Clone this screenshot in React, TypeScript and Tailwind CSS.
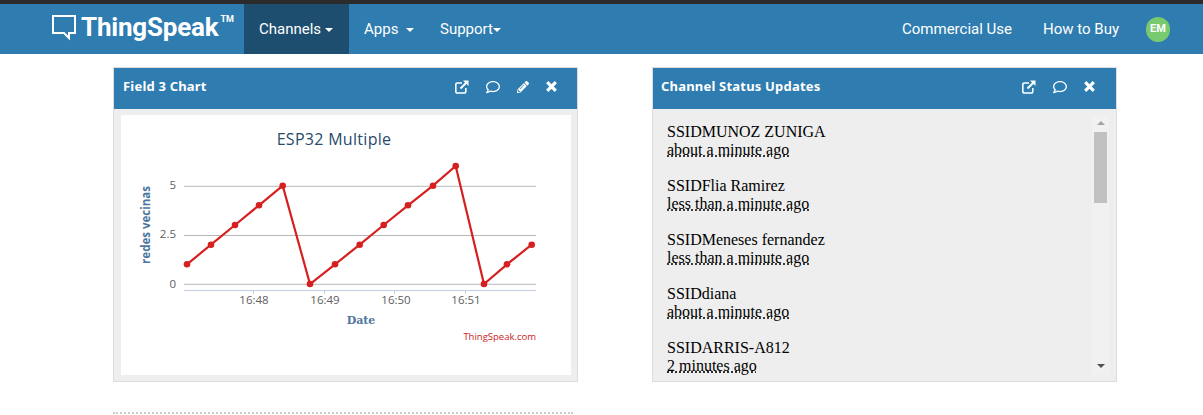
import React from 'react';
import { FaPencilAlt, FaRegComment } from 'react-icons/fa';

const points = [
  [187, 264.3], [211, 244.7], [235, 225], [259, 205.3], [282.7, 185.7], [310, 284], [335, 264.3],
  [359.7, 244.7], [383.7, 225], [408, 205.3], [433, 185.7], [455.7, 166], [484, 284], [507, 264.3], [531.7, 244.7],
];

const updates = [
  ['SSIDMUNOZ ZUNIGA', 'about a minute ago'],
  ['SSIDFlia Ramirez', 'less than a minute ago'],
  ['SSIDMeneses fernandez', 'less than a minute ago'],
  ['SSIDdiana', 'about a minute ago'],
  ['SSIDARRIS-A812', '2 minutes ago'],
];

const Caret = () => (
  <span className="inline-block w-0 h-0 ml-1 align-middle border-x-[4px] border-x-transparent border-t-[4px] border-t-white" />
);

const ExternalIcon = () => (
  <svg width="14" height="14" viewBox="0 0 14 14" fill="none" stroke="white" strokeWidth="1.6">
    <path d="M7 3H2.2A1.4 1.4 0 0 0 .8 4.4v7.2A1.4 1.4 0 0 0 2.2 13h7.2a1.4 1.4 0 0 0 1.4-1.4V8" />
    <path d="M5.5 8.5L12 2" strokeWidth="2" />
    <path d="M8 .5h5.5V6z" fill="white" stroke="none" />
  </svg>
);

const CloseIcon = () => (
  <svg width="11" height="11" viewBox="0 0 11 11" stroke="white" strokeWidth="3.2">
    <path d="M1.2 1.2l8.6 8.6M9.8 1.2l-8.6 8.6" />
  </svg>
);

const Chart = () => (
  <svg width="450" height="260" viewBox="121 115 450 260" className="block">
    <text x="334" y="145" textAnchor="middle" fontSize="16" letterSpacing="0.3" fill="#274b6d" fontFamily="'Open Sans', sans-serif">ESP32 Multiple</text>
    {[186.3, 235.5, 284.3].map((y) => (
      <line key={y} x1="184" x2="536" y1={y} y2={y} stroke="#b8b8b8" strokeWidth="1" />
    ))}
    <line x1="184" x2="536" y1="290.5" y2="290.5" stroke="#c0d0e0" strokeWidth="1" />
    {[253.5, 324.5, 394.5, 465.5].map((x) => (
      <line key={x} x1={x} x2={x} y1="290" y2="294" stroke="#c0d0e0" strokeWidth="1" />
    ))}
    <g fontSize="11.5" fill="#606060" fontFamily="'Open Sans', sans-serif">
      <text x="176" y="189" textAnchor="end">5</text>
      <text x="176" y="238" textAnchor="end">2.5</text>
      <text x="176" y="288" textAnchor="end">0</text>
      <text x="254" y="304" textAnchor="middle">16:48</text>
      <text x="325" y="304" textAnchor="middle">16:49</text>
      <text x="396" y="304" textAnchor="middle">16:50</text>
      <text x="466" y="304" textAnchor="middle">16:51</text>
    </g>
    <text x="361" y="324" textAnchor="middle" fontSize="11" fontWeight="bold" fill="#4d759e" fontFamily="'DejaVu Serif', serif">Date</text>
    <text transform="translate(150 225) rotate(-90)" textAnchor="middle" fontSize="11.5" fontWeight="bold" fill="#4d759e" fontFamily="'Open Sans', sans-serif">redes vecinas</text>
    <text x="536" y="340" textAnchor="end" fontSize="9.5" fill="#cc2222" fontFamily="'Open Sans', sans-serif">ThingSpeak.com</text>
    <polyline points={points.map((p) => p.join(',')).join(' ')} fill="none" stroke="#d62020" strokeWidth="2.2" />
    {points.map(([x, y]) => (
      <circle key={x} cx={x} cy={y} r="3.3" fill="#d62020" />
    ))}
  </svg>
);

const PanelHead = ({ title, edit }: { title: string; edit?: boolean }) => (
  <div className="h-[41px] pb-[4px] bg-[#2e7cb0] flex items-center justify-between text-white">
    <span className="text-[13px] font-bold tracking-[0.2px]">{title}</span>
    <div className={`flex items-center ${edit ? 'gap-[17px] pr-[20px]' : 'gap-[17px] pr-[21px]'}`}>
      <ExternalIcon />
      <FaRegComment size={14} />
      {edit && <FaPencilAlt size={12} />}
      <CloseIcon />
    </div>
  </div>
);

export default function App() {
  return (
    <div className="w-[1203px] h-[415px] overflow-hidden bg-white font-['Noto_Sans',sans-serif]">
      <div className="h-1 bg-[#2b2b2b]" />
      <nav className="h-[50px] bg-[#2e7cb0] flex items-center text-white text-[15px] font-['Roboto',sans-serif]">
        <div className="flex items-center w-[244px] pl-[52px] mb-[4px]">
          <svg width="25" height="27" viewBox="0 0 25 27" fill="none" stroke="white" strokeWidth="2" className="mt-[1px]">
            <path d="M1 2h22v17h-6v5l-5-5H1z" />
          </svg>
          <span className="ml-[4px] text-[26px] font-bold tracking-[-0.2px]">ThingSpeak</span>
          <span className="text-[9px] font-bold mb-[14px] ml-[2px]">TM</span>
        </div>
        <div className="h-full w-[105px] bg-[#1d4e70] flex items-center pl-[15px] pt-[1px]">Channels <Caret /></div>
        <div className="pl-[15px] w-[76px] pt-[1px]">Apps <Caret /></div>
        <div className="pl-[15px] pt-[1px]">Support<span className="inline-block w-0 h-0 align-middle border-x-[4px] border-x-transparent border-t-[4px] border-t-white" /></div>
        <div className="ml-auto flex items-center pr-[33px] pt-[1px]">
          <span>Commercial Use</span>
          <span className="ml-[31px]">How to Buy</span>
          <span className="ml-[27px] w-[24px] h-[25px] rounded-full bg-[#79c96f] flex items-center justify-center text-[11px] font-bold">EM</span>
        </div>
      </nav>
      <div className="flex gap-[74px] pl-[113px] pt-[13px]">
        <section className="w-[465px] h-[315px] bg-[#eee] border border-[#ddd]">
          <div className="pl-[9px] bg-[#2e7cb0]"><PanelHead title="Field 3 Chart" edit /></div>
          <div className="pt-[6px] pl-[7px]"><div className="bg-white w-[450px]"><Chart /></div></div>
        </section>
        <section className="w-[465px] h-[315px] bg-[#eee] border border-[#ddd]">
          <div className="pl-[8px] bg-[#2e7cb0]"><PanelHead title="Channel Status Updates" /></div>
          <div className="flex pt-[6px]">
            <div className="w-[439px] h-[260px] overflow-hidden pl-[14px] pt-[8px] text-[16px] leading-[18px] text-black font-['Liberation_Serif',serif]">
              {updates.map(([ssid, time]) => (
                <div key={ssid} className="mb-[18px]">
                  <div>{ssid}</div>
                  <div className="underline decoration-dotted underline-offset-[1px]">{time}</div>
                </div>
              ))}
            </div>
            <div className="w-[17px] h-[260px] bg-[#f1f1f1] flex flex-col items-center pt-[6px]">
              <span className="w-0 h-0 border-x-[4px] border-x-transparent border-b-[4px] border-b-[#a3a3a3]" />
              <span className="w-[13px] h-[71px] bg-[#c1c1c1] mt-[7px]" />
              <span className="w-0 h-0 border-x-[4px] border-x-transparent border-t-[4px] border-t-[#505050] mt-auto mb-[7px]" />
            </div>
          </div>
        </section>
      </div>
      <div className="ml-[113px] mt-[30px] w-[460px] border-t-2 border-dotted border-[#ccc]" />
    </div>
  );
}
